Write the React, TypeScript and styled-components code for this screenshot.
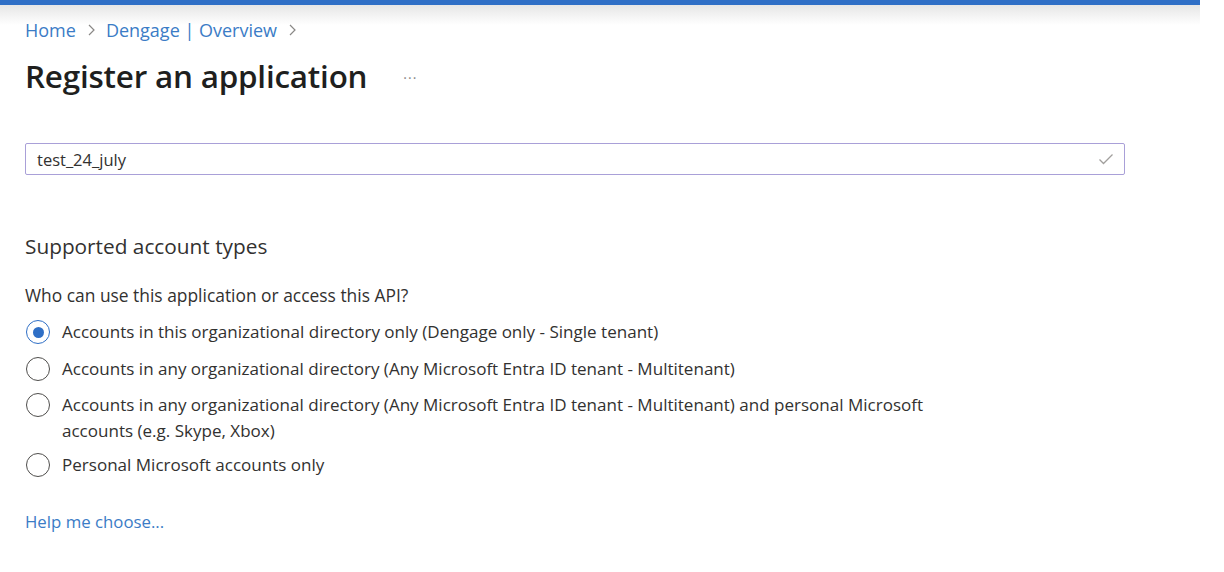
import React from "react";
import styled, { createGlobalStyle } from "styled-components";

const Global = createGlobalStyle`
  html, body { margin: 0; padding: 0; background: #ffffff; }
  body { font-family: "Open Sans", "Noto Sans", sans-serif; color: #323130; }
`;

const Page = styled.div`
  width: 1224px;
  height: 572px;
  overflow: hidden;
  background: #fff;
`;

const TopStrip = styled.div`
  width: 1200px;
  height: 5px;
  background: #2f6fc6;
`;

const Shade = styled.div`
  width: 1200px;
  height: 20px;
  margin-bottom: -20px;
  background: linear-gradient(#e6e6e6, rgba(255,255,255,0));
`;

const Content = styled.div`
  position: relative;
  padding: 13px 0 0 25px;
  display: flex;
  flex-direction: column;
`;

const Crumbs = styled.nav`
  display: flex;
  align-items: center;
  gap: 10px;
  font-size: 18px;
  line-height: 24px;
  color: #3b7cc6;
`;

const Crumb = styled.span``;

const Sep = styled.span`
  display: flex;
  align-items: center;
`;

const TitleRow = styled.div`
  display: flex;
  align-items: center;
  margin-top: 13px;
  height: 40px;
`;

const Title = styled.h1`
  margin: 0;
  font-size: 31.4px;
  font-weight: 600;
  color: #201f1e;
  letter-spacing: -0.2px;
`;

const More = styled.span`
  margin-left: 36px;
  color: #8a8886;
  font-size: 14px;
  letter-spacing: 1px;
  margin-top: 4px;
`;

const InputBox = styled.div`
  margin-top: 48px;
  width: 1100px;
  height: 32px;
  box-sizing: border-box;
  border: 1px solid #a9a0d8;
  border-radius: 2px;
  display: flex;
  align-items: center;
  justify-content: space-between;
  padding: 0 10px 0 11px;
  font-size: 16.5px;
  color: #323130;
`;

const SectionTitle = styled.h2`
  margin: 57px 0 0;
  font-size: 20.8px;
  font-weight: 400;
  color: #323130;
  line-height: 28px;
`;

const Question = styled.div`
  margin-top: 23px;
  font-size: 17.4px;
  line-height: 24px;
  color: #323130;
`;

const Options = styled.div`
  margin-top: 12px;
  display: flex;
  flex-direction: column;
`;

const Option = styled.label<{ $gap: number }>`
  display: flex;
  align-items: flex-start;
  gap: 12px;
  margin-top: ${(p) => p.$gap}px;
  font-size: 17.05px;
  line-height: 26px;
  color: #323130;
`;

const OptionText = styled.span`
  max-width: 870px;
`;

const Radio = styled.span<{ $checked?: boolean }>`
  flex: none;
  width: 24px;
  height: 24px;
  margin-left: 1px;
  margin-top: 1px;
  box-sizing: border-box;
  border-radius: 50%;
  border: 1.5px solid ${(p) => (p.$checked ? "#2f6fc6" : "#4f4e4c")};
  display: flex;
  align-items: center;
  justify-content: center;
  &::after {
    content: "";
    width: 11px;
    height: 11px;
    border-radius: 50%;
    background: ${(p) => (p.$checked ? "#2f6fc6" : "transparent")};
  }
`;

const HelpLink = styled.a`
  margin-top: 32px;
  font-size: 16.8px;
  line-height: 24px;
  color: #3b7cc6;
  text-decoration: none;
`;

const Chevron = () => (
  <svg width="10" height="14" viewBox="0 0 10 14">
    <path d="M3 2 L8 7 L3 12" fill="none" stroke="#8a8886" strokeWidth="1.2" />
  </svg>
);

const options = [
  "Accounts in this organizational directory only (Dengage only - Single tenant)",
  "Accounts in any organizational directory (Any Microsoft Entra ID tenant - Multitenant)",
  "Accounts in any organizational directory (Any Microsoft Entra ID tenant - Multitenant) and personal Microsoft accounts (e.g. Skype, Xbox)",
  "Personal Microsoft accounts only",
];

const gaps = [0, 11, 10, 8];

export default function App() {
  return (
    <Page>
      <Global />
      <TopStrip />
      <Shade />
      <Content>
        <Crumbs>
          <Crumb>Home</Crumb>
          <Sep><Chevron /></Sep>
          <Crumb>Dengage | Overview</Crumb>
          <Sep><Chevron /></Sep>
        </Crumbs>
        <TitleRow>
          <Title>Register an application</Title>
          <More>···</More>
        </TitleRow>
        <InputBox>
          <span>test_24_july</span>
          <svg width="16" height="12" viewBox="0 0 16 12">
            <path d="M1.5 6.5 L5.5 10.5 L14.5 1.5" fill="none" stroke="#a19f9d" strokeWidth="1.3" />
          </svg>
        </InputBox>
        <SectionTitle>Supported account types</SectionTitle>
        <Question>Who can use this application or access this API?</Question>
        <Options>
          {options.map((o, i) => (
            <Option key={i} $gap={gaps[i]}>
              <Radio $checked={i === 0} />
              <OptionText>{o}</OptionText>
            </Option>
          ))}
        </Options>
        <HelpLink>Help me choose...</HelpLink>
      </Content>
    </Page>
  );
}
